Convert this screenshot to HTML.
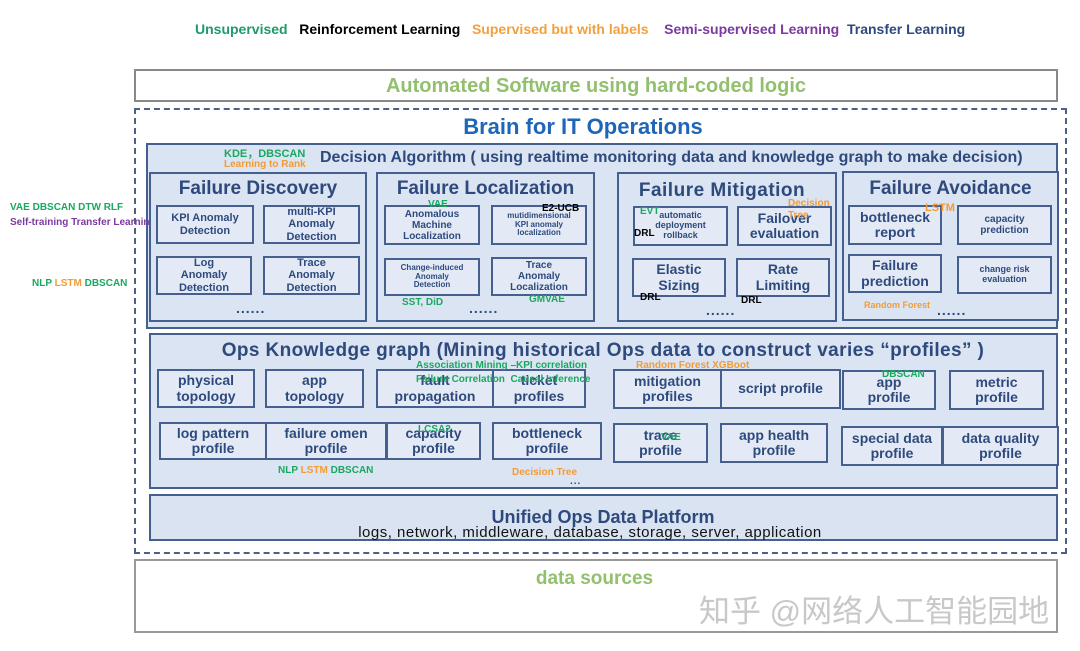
<!DOCTYPE html>
<html><head><meta charset="utf-8"><style>
body{margin:0;width:1080px;height:651px;background:#fff;position:relative;overflow:hidden;font-family:"Liberation Sans","Noto Sans CJK SC",sans-serif;font-weight:bold}
div{position:absolute;box-sizing:border-box}
.b{border:2px solid #45608e;background:#e3eaf5;color:#2e4a7d;display:flex;align-items:center;justify-content:center;text-align:center;line-height:1.1}
.o{border:2px solid #45608e;background:#dbe4f2}
.t{color:#2e4a7d;white-space:nowrap}
.s{font-size:11px}.xs{font-size:10px}.m{font-size:14px}
.g{color:#1aa860;font-size:10px;white-space:nowrap}
.or{color:#f39b34;font-size:10px;white-space:nowrap}
.k{color:#000;font-size:10px;white-space:nowrap}
.dots{color:#2e4a7d;font-size:14px;letter-spacing:1px}
</style></head><body>
<div style="left:195px;top:21px;font-size:14px;white-space:nowrap"><span style="color:#1f9a6a">Unsupervised</span>&nbsp;&nbsp; <span style="color:#000">Reinforcement Learning</span>&nbsp;&nbsp; <span style="color:#f3a03c">Supervised but with labels</span>&nbsp;&nbsp;&nbsp; <span style="color:#7a3aa0">Semi-supervised Learning</span>&nbsp; <span style="color:#2e4a7d">Transfer Learning</span></div>

<div style="left:134px;top:69px;width:924px;height:33px;border:2px solid #888;color:#92c06e;font-size:20px;display:flex;align-items:center;justify-content:center;padding-top:2px">Automated Software using hard-coded logic</div>
<div style="left:134px;top:108px;width:933px;height:446px;border:2px dashed #4d6187"></div>
<div class="t" style="left:0;width:1166px;top:114px;text-align:center;color:#1f66b8;font-size:22px">Brain for IT Operations</div>

<div class="o" style="left:146px;top:143px;width:912px;height:186px"></div>
<div class="t" style="left:320px;top:149px;font-size:16px">Decision Algorithm ( using realtime monitoring data and knowledge graph to make decision)</div>
<div class="g" style="left:224px;top:145px;font-size:11px">KDE，DBSCAN</div>
<div class="or" style="left:224px;top:159px">Learning to Rank</div>

<div style="left:10px;top:202px;font-size:10px;color:#1aa860;white-space:nowrap">VAE DBSCAN DTW RLF</div>
<div style="left:10px;top:217px;font-size:10px;white-space:nowrap"><span style="color:#7a3aa0">Self-training</span> <span style="color:#7a3aa0">Transfer Learning</span></div>
<div style="left:32px;top:278px;font-size:10px;white-space:nowrap"><span style="color:#1aa860">NLP</span> <span style="color:#f39b34">LSTM</span> <span style="color:#1aa860">DBSCAN</span></div>

<!-- Failure Discovery -->
<div class="o" style="left:149px;top:172px;width:218px;height:150px"></div>
<div class="t" style="left:149px;width:218px;top:178px;text-align:center;font-size:19px">Failure Discovery</div>
<div class="b s" style="left:156px;top:205px;width:98px;height:39px">KPI Anomaly<br>Detection</div>
<div class="b s" style="left:263px;top:205px;width:97px;height:39px">multi-KPI<br>Anomaly<br>Detection</div>
<div class="b s" style="left:156px;top:256px;width:96px;height:39px">Log<br>Anomaly<br>Detection</div>
<div class="b s" style="left:263px;top:256px;width:97px;height:39px">Trace<br>Anomaly<br>Detection</div>
<div class="dots" style="left:236px;top:300px">......</div>

<!-- Failure Localization -->
<div class="o" style="left:376px;top:172px;width:219px;height:150px"></div>
<div class="t" style="left:376px;width:219px;top:178px;text-align:center;font-size:19px">Failure Localization</div>
<div class="b xs" style="left:384px;top:205px;width:96px;height:40px">Anomalous<br>Machine<br>Localization</div>
<div class="b" style="left:491px;top:205px;width:96px;height:40px;font-size:8px">mutidimensional<br>KPI anomaly<br>localization</div>
<div class="b" style="left:384px;top:258px;width:96px;height:38px;font-size:8px">Change-induced<br>Anomaly<br>Detection</div>
<div class="b xs" style="left:491px;top:257px;width:96px;height:39px">Trace<br>Anomaly<br>Localization</div>
<div class="g" style="left:428px;top:199px">VAE</div>
<div class="k" style="left:542px;top:203px">E2-UCB</div>
<div class="g" style="left:402px;top:297px">SST, DiD</div>
<div class="g" style="left:529px;top:294px">GMVAE</div>
<div class="dots" style="left:469px;top:300px">......</div>

<!-- Failure Mitigation -->
<div class="o" style="left:617px;top:172px;width:220px;height:150px"></div>
<div class="t" style="left:617px;width:210px;top:180px;text-align:center;font-size:19px;letter-spacing:0.5px">Failure Mitigation</div>
<div class="b" style="left:633px;top:206px;width:95px;height:40px;font-size:9px">automatic<br>deployment<br>rollback</div>
<div class="b m" style="left:737px;top:206px;width:95px;height:40px">Failover<br>evaluation</div>
<div class="b m" style="left:632px;top:258px;width:94px;height:39px">Elastic<br>Sizing</div>
<div class="b m" style="left:736px;top:258px;width:94px;height:39px">Rate<br>Limiting</div>
<div class="g" style="left:640px;top:206px">EVT</div>
<div class="k" style="left:634px;top:228px">DRL</div>
<div class="k" style="left:640px;top:292px">DRL</div>
<div class="k" style="left:741px;top:295px">DRL</div>
<div class="or" style="left:788px;top:198px">Decision</div>
<div class="or" style="left:788px;top:210px">Tree</div>
<div class="dots" style="left:706px;top:302px">......</div>

<!-- Failure Avoidance -->
<div class="o" style="left:842px;top:171px;width:217px;height:150px"></div>
<div class="t" style="left:842px;width:217px;top:178px;text-align:center;font-size:19px">Failure Avoidance</div>
<div class="b m" style="left:848px;top:205px;width:94px;height:40px">bottleneck<br>report</div>
<div class="b xs" style="left:957px;top:205px;width:95px;height:40px">capacity<br>prediction</div>
<div class="b m" style="left:848px;top:254px;width:94px;height:39px">Failure<br>prediction</div>
<div class="b" style="left:957px;top:256px;width:95px;height:38px;font-size:9px">change risk<br>evaluation</div>
<div class="or" style="left:925px;top:202px;font-size:11px">LSTM</div>
<div class="or" style="left:864px;top:300px;font-size:9px">Random Forest</div>
<div class="dots" style="left:937px;top:302px">......</div>

<!-- Ops KG -->
<div class="o" style="left:149px;top:333px;width:909px;height:156px"></div>
<div class="t" style="left:203px;width:800px;top:340px;text-align:center;font-size:19px;letter-spacing:0.4px">Ops Knowledge graph (Mining historical Ops data to construct varies “profiles” )</div>
<div class="b m" style="left:157px;top:369px;width:98px;height:39px">physical<br>topology</div>
<div class="b m" style="left:265px;top:369px;width:99px;height:39px">app<br>topology</div>
<div class="b m" style="left:376px;top:369px;width:118px;height:39px">fault<br>propagation</div>
<div class="b m" style="left:492px;top:369px;width:94px;height:39px">ticket<br>profiles</div>
<div class="b m" style="left:613px;top:369px;width:109px;height:40px">mitigation<br>profiles</div>
<div class="b m" style="left:720px;top:369px;width:121px;height:40px">script profile</div>
<div class="b m" style="left:842px;top:370px;width:94px;height:40px">app<br>profile</div>
<div class="b m" style="left:949px;top:370px;width:95px;height:40px">metric<br>profile</div>
<div class="b m" style="left:159px;top:422px;width:108px;height:38px">log pattern<br>profile</div>
<div class="b m" style="left:265px;top:422px;width:122px;height:38px">failure omen<br>profile</div>
<div class="b m" style="left:386px;top:422px;width:95px;height:38px">capacity<br>profile</div>
<div class="b m" style="left:492px;top:422px;width:110px;height:38px">bottleneck<br>profile</div>
<div class="b m" style="left:613px;top:423px;width:95px;height:40px">trace<br>profile</div>
<div class="b m" style="left:720px;top:423px;width:108px;height:40px">app health<br>profile</div>
<div class="b m" style="left:841px;top:426px;width:102px;height:40px">special data<br>profile</div>
<div class="b m" style="left:942px;top:426px;width:117px;height:40px">data quality<br>profile</div>
<div class="g" style="left:416px;top:360px">Association Mining –KPI correlation</div>
<div class="g" style="left:416px;top:374px">Failure Correlation &nbsp;Causal Inference</div>
<div class="or" style="left:636px;top:360px">Random Forest XGBoot</div>
<div class="g" style="left:882px;top:369px">DBSCAN</div>
<div class="g" style="left:418px;top:424px">LCSA2</div>
<div class="g" style="left:661px;top:432px">VAE</div>
<div style="left:278px;top:465px;font-size:10px;white-space:nowrap"><span style="color:#1aa860">NLP</span> <span style="color:#f39b34">LSTM</span> <span style="color:#1aa860">DBSCAN</span></div>
<div class="or" style="left:512px;top:467px">Decision Tree</div>
<div class="dots" style="left:570px;top:476px;font-size:10px">...</div>

<div class="o" style="left:149px;top:494px;width:909px;height:47px;background:#d9e3f2"></div>
<div class="t" style="left:149px;width:908px;top:507px;text-align:center;font-size:18px">Unified Ops Data Platform</div>
<div style="left:149px;width:882px;top:524px;text-align:center;font-size:15px;letter-spacing:0.5px;font-weight:normal;color:#111;white-space:nowrap">logs, network, middleware, database, storage, server, application</div>

<div style="left:134px;top:559px;width:924px;height:74px;border:2px solid #999;color:#92c06e;font-size:19px;text-align:center;padding-top:7px;padding-right:3px">data sources</div>
<div style="left:699px;top:586px;font-size:31px;font-weight:normal;color:#c8c8c8;white-space:nowrap">知乎 @网络人工智能园地</div>
</body></html>
